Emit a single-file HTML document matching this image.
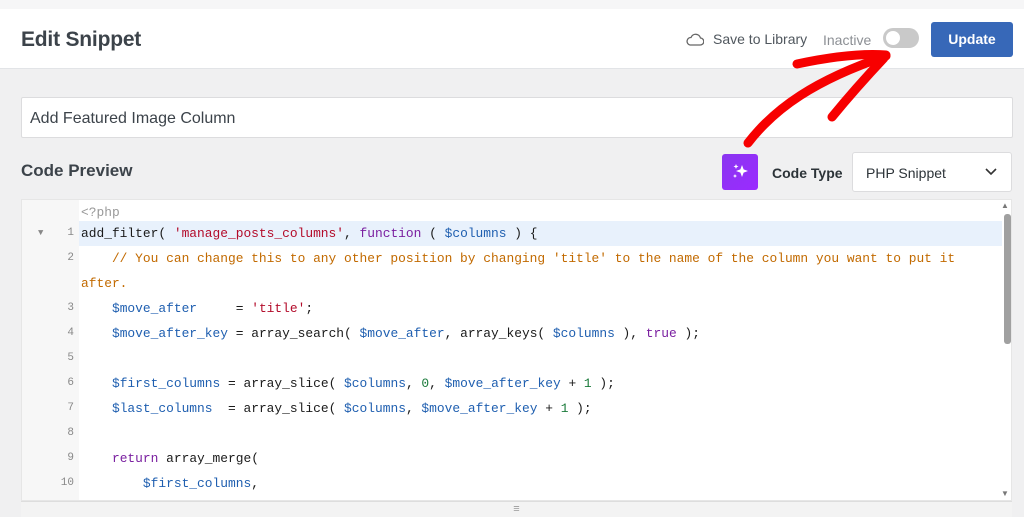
<!DOCTYPE html>
<html><head><meta charset="utf-8"><style>
*{box-sizing:border-box;margin:0;padding:0}
body{width:1024px;height:517px;overflow:hidden;background:#f0f0f1;font-family:"Liberation Sans",sans-serif;position:relative}
.top{position:absolute;left:0;top:0;width:1024px;height:9px;background:#f6f6f7}
.hdr{position:absolute;left:0;top:9px;width:1024px;height:60px;background:#fff;border-bottom:1px solid #e2e4e7}
.title{position:absolute;left:21px;top:19px;font-size:21px;color:#3c434a;font-weight:bold;letter-spacing:-0.2px}
.save{position:absolute;left:713px;top:22px;font-size:14px;color:#50575e}
.inact{position:absolute;left:823px;top:23px;font-size:14px;color:#8c8f94}
.tog{position:absolute;left:883px;top:19px;width:36px;height:20px;border-radius:10px;background:#c9c9c9}
.tog:after{content:"";position:absolute;left:3px;top:3px;width:14px;height:14px;border-radius:50%;background:#fff}
.upd{position:absolute;left:931px;top:13px;width:82px;height:35px;border-radius:3px;background:#3768b8;color:#fff;font-weight:bold;font-size:14px;text-align:center;line-height:35px}
.inp{position:absolute;left:21px;top:97px;width:992px;height:41px;background:#fff;border:1px solid #dcdcde;border-radius:2px;font-size:16px;color:#3c434a;padding:12px 8px}
.cp{position:absolute;left:21px;top:161px;font-size:17px;font-weight:bold;color:#3c434a}
.ai{position:absolute;left:722px;top:154px;width:36px;height:36px;border-radius:3px;background:linear-gradient(135deg,#8a35f0,#9b2bff)}
.ct{position:absolute;left:772px;top:165px;font-size:14px;color:#2c3338;font-weight:bold}
.sel{position:absolute;left:852px;top:152px;width:160px;height:40px;background:#fff;border:1px solid #dcdcde;border-radius:3px;font-size:14px;color:#2c3338;padding:12px 13px}
.ed{position:absolute;left:21px;top:199px;width:991px;height:302px;background:#fff;border:1px solid #e6e6e6;overflow:hidden}
.gut{position:absolute;left:0;top:0;width:57px;height:302px;background:#f7f7f7}
.bar{position:absolute;left:21px;top:501px;width:991px;height:16px;background:#f3f3f3;border-top:1px solid #ddd;text-align:center;font-size:11px;color:#999;line-height:14px}
.code{position:absolute;left:0;top:0;font-family:"Liberation Mono",monospace;font-size:12.9px}
.l{position:absolute;left:0;width:980px;height:25px;line-height:25px;white-space:pre}
.n{position:absolute;left:0;width:52px;text-align:right;color:#888;font-size:11px}
.t{position:absolute;left:59px;color:#1a1a1a}
.hl{background:#e8f1fc}
.s{color:#b30b2a}.k{color:#7a1fa0}.v{color:#1f5fb0}.c{color:#c26a00}.g{color:#999}.num{color:#1a7a3a}
.sb{position:absolute;left:982px;top:14px;width:7px;height:130px;background:#a0a0a0;border-radius:3px}
</style></head><body>
<div class="top"></div>
<div class="hdr">
<div class="title">Edit Snippet</div>
<svg style="position:absolute;left:686px;top:24px" width="18" height="13" viewBox="0 0 18 13"><path d="M4 12h10a3.5 3.5 0 0 0 .5-7A5 5 0 0 0 5 4.5 3.8 3.8 0 0 0 4 12z" fill="none" stroke="#666" stroke-width="1.3"/></svg>
<div class="save">Save to Library</div>
<div class="inact">Inactive</div>
<div class="tog"></div>
<div class="upd">Update</div>
</div>
<div class="inp">Add Featured Image Column</div>
<div class="cp">Code Preview</div>
<div class="ai"><svg width="36" height="36" viewBox="0 0 36 36"><path d="M20 11l1.6 4.4L26 17l-4.4 1.6L20 23l-1.6-4.4L14 17l4.4-1.6z" fill="#fff"/><path d="M14 10l.7 1.8 1.8.7-1.8.7L14 15l-.7-1.8-1.8-.7 1.8-.7z" fill="#fff"/><path d="M13 20l.6 1.4 1.4.6-1.4.6L13 24l-.6-1.4-1.4-.6 1.4-.6z" fill="#fff"/></svg></div>
<div class="ct">Code Type</div>
<div class="sel">PHP Snippet<svg style="position:absolute;right:14px;top:15px" width="12" height="8" viewBox="0 0 12 8"><path d="M1 1l5 5 5-5" fill="none" stroke="#333" stroke-width="1.6"/></svg></div>
<div class="ed">
<div class="gut"></div>
<div class="code">
<div class="l" style="top:1px;height:20px;line-height:24px"><span class="t g">&lt;?php</span></div>
<div class="l hl" style="top:21px;left:57px;width:923px"></div>
<div class="l" style="top:21px"><span style="position:absolute;left:16px;color:#888;font-size:9px">▼</span><span class="n">1</span><span class="t">add_filter( <span class="s">'manage_posts_columns'</span>, <span class="k">function</span> ( <span class="v">$columns</span> ) {</span></div>
<div class="l" style="top:46px"><span class="n">2</span><span class="t c">    // You can change this to any other position by changing 'title' to the name of the column you want to put it</span></div>
<div class="l" style="top:71px"><span class="t c">after.</span></div>
<div class="l" style="top:96px"><span class="n">3</span><span class="t">    <span class="v">$move_after</span>     = <span class="s">'title'</span>;</span></div>
<div class="l" style="top:121px"><span class="n">4</span><span class="t">    <span class="v">$move_after_key</span> = array_search( <span class="v">$move_after</span>, array_keys( <span class="v">$columns</span> ), <span class="k">true</span> );</span></div>
<div class="l" style="top:146px"><span class="n">5</span></div>
<div class="l" style="top:171px"><span class="n">6</span><span class="t">    <span class="v">$first_columns</span> = array_slice( <span class="v">$columns</span>, <span class="num">0</span>, <span class="v">$move_after_key</span> + <span class="num">1</span> );</span></div>
<div class="l" style="top:196px"><span class="n">7</span><span class="t">    <span class="v">$last_columns</span>  = array_slice( <span class="v">$columns</span>, <span class="v">$move_after_key</span> + <span class="num">1</span> );</span></div>
<div class="l" style="top:221px"><span class="n">8</span></div>
<div class="l" style="top:246px"><span class="n">9</span><span class="t">    <span class="k">return</span> array_merge(</span></div>
<div class="l" style="top:271px"><span class="n">10</span><span class="t">        <span class="v">$first_columns</span>,</span></div>
</div>
<div class="sb"></div>
<div style="position:absolute;left:979px;top:1px;font-size:8px;color:#777">▲</div>
<div style="position:absolute;left:979px;top:289px;font-size:8px;color:#777">▼</div>
</div>
<div class="bar">≡</div>
<svg style="position:absolute;left:0;top:0" width="1024" height="517" viewBox="0 0 1024 517"><g fill="none" stroke="#f70000" stroke-width="9" stroke-linecap="round" stroke-linejoin="round"><path d="M748 143C775 108 815 80 886 56"/><path d="M797 64C830 57 860 53 886 55"/><path d="M832 117C850 95 868 75 884 58"/></g></svg>
</body></html>
